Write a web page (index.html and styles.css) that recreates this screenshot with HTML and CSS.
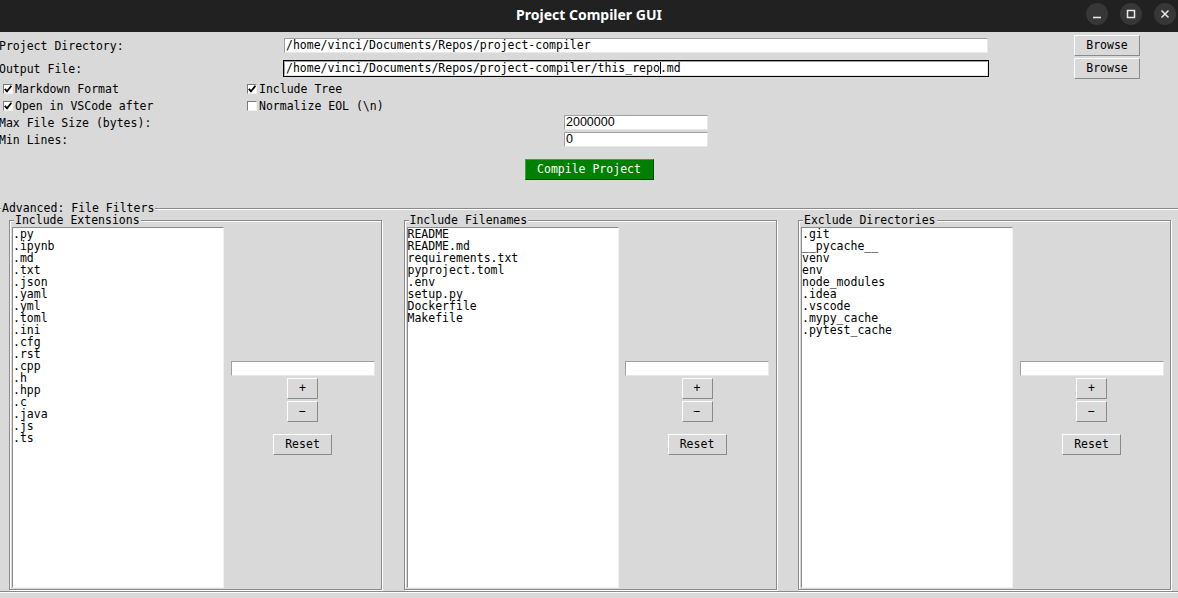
FILE: index.html
```html
<!DOCTYPE html>
<html lang="en">
<head>
<meta charset="utf-8">
<title>Project Compiler GUI</title>
<link rel="stylesheet" href="styles.css">
</head>
<body>
<header class="titlebar">
  <div class="title">Project Compiler GUI</div>
  <div class="wctrls">
    <span class="wbtn"><svg viewBox="0 0 22 22"><line x1="7" y1="14.5" x2="15" y2="14.5" stroke="#e8e8e8" stroke-width="1.6"/></svg></span>
    <span class="wbtn"><svg viewBox="0 0 22 22"><rect x="7.5" y="7.5" width="7" height="7" fill="none" stroke="#e8e8e8" stroke-width="1.5"/></svg></span>
    <span class="wbtn"><svg viewBox="0 0 22 22"><path d="M7.5 7.5 L14.5 14.5 M14.5 7.5 L7.5 14.5" stroke="#e8e8e8" stroke-width="1.5" fill="none"/></svg></span>
  </div>
</header>
<main class="app">
  <div class="row path-row">
    <span class="lbl">Project Directory:</span>
    <div class="entry path">/home/vinci/Documents/Repos/project-compiler</div>
    <button class="btn browse">Browse</button>
  </div>
  <div class="row path-row">
    <span class="lbl">Output File:</span>
    <div class="entry path focus">/home/vinci/Documents/Repos/project-compiler/this_repo<span class="caret"></span>.md</div>
    <button class="btn browse">Browse</button>
  </div>
  <div class="row check-row">
    <span class="check-item first"><span class="cb"><svg viewBox="0 0 8 8"><path d="M0.8 3.8 L3 6.4 L7.4 0.8" fill="none" stroke="#000" stroke-width="1.8"/></svg></span>Markdown Format</span>
    <span class="check-item"><span class="cb"><svg viewBox="0 0 8 8"><path d="M0.8 3.8 L3 6.4 L7.4 0.8" fill="none" stroke="#000" stroke-width="1.8"/></svg></span>Include Tree</span>
  </div>
  <div class="row check-row">
    <span class="check-item first"><span class="cb"><svg viewBox="0 0 8 8"><path d="M0.8 3.8 L3 6.4 L7.4 0.8" fill="none" stroke="#000" stroke-width="1.8"/></svg></span>Open in VSCode after</span>
    <span class="check-item"><span class="cb"></span>Normalize EOL (\n)</span>
  </div>
  <div class="row num-row">
    <span class="lbl">Max File Size (bytes):</span>
    <div class="entry num">2000000</div>
  </div>
  <div class="row num-row">
    <span class="lbl">Min Lines:</span>
    <div class="entry num">0</div>
  </div>
  <div class="compile-row">
    <button class="btn compile">Compile Project</button>
  </div>
  <fieldset class="group outer">
    <legend>Advanced: File Filters</legend>
    <div class="filters">
      <fieldset class="group inner">
        <legend>Include Extensions</legend>
        <div class="pane">
          <ul class="listbox">
            <li>.py</li><li>.ipynb</li><li>.md</li><li>.txt</li><li>.json</li><li>.yaml</li><li>.yml</li><li>.toml</li><li>.ini</li><li>.cfg</li><li>.rst</li><li>.cpp</li><li>.h</li><li>.hpp</li><li>.c</li><li>.java</li><li>.js</li><li>.ts</li>
          </ul>
          <div class="controls">
            <div class="entry small"></div>
            <button class="btn sq">+</button>
            <button class="btn sq minus">−</button>
            <button class="btn reset">Reset</button>
          </div>
        </div>
      </fieldset>
      <fieldset class="group inner">
        <legend>Include Filenames</legend>
        <div class="pane">
          <ul class="listbox">
            <li>README</li><li>README.md</li><li>requirements.txt</li><li>pyproject.toml</li><li>.env</li><li>setup.py</li><li>Dockerfile</li><li>Makefile</li>
          </ul>
          <div class="controls">
            <div class="entry small"></div>
            <button class="btn sq">+</button>
            <button class="btn sq minus">−</button>
            <button class="btn reset">Reset</button>
          </div>
        </div>
      </fieldset>
      <fieldset class="group inner">
        <legend>Exclude Directories</legend>
        <div class="pane">
          <ul class="listbox">
            <li>.git</li><li>__pycache__</li><li>venv</li><li>env</li><li>node_modules</li><li>.idea</li><li>.vscode</li><li>.mypy_cache</li><li>.pytest_cache</li>
          </ul>
          <div class="controls">
            <div class="entry small"></div>
            <button class="btn sq">+</button>
            <button class="btn sq minus">−</button>
            <button class="btn reset">Reset</button>
          </div>
        </div>
      </fieldset>
    </div>
  </fieldset>
</main>
</body>
</html>
```
FILE: styles.css
```css
* { box-sizing: border-box; }
html, body { margin: 0; padding: 0; }
body {
  width: 1178px;
  height: 598px;
  overflow: hidden;
  background: #d9d9d9;
  font-family: "DejaVu Sans Mono", "Liberation Mono", monospace;
  font-size: 11.5px;
  color: #000;
}
.titlebar {
  height: 32px;
  background: #212121;
  display: grid;
  grid-template-columns: 1fr auto 1fr;
  align-items: start;
}
.title {
  grid-column: 2;
  color: #fff;
  font-family: "Noto Sans", "DejaVu Sans", sans-serif;
  font-weight: 700;
  font-size: 14px;
  line-height: 30px;
}
.wctrls {
  grid-column: 3;
  justify-self: end;
  display: flex;
  gap: 12px;
  padding: 3px 2px 0 0;
}
.wbtn {
  width: 22px;
  height: 22px;
  border-radius: 50%;
  background: #373737;
  display: flex;
}
.wbtn svg { width: 22px; height: 22px; }

.app { padding-top: 2px; }
.row { display: flex; align-items: center; }
.path-row { height: 23px; }
.lbl { margin-left: -1px; white-space: nowrap; flex: none; }
.path-row .lbl { width: 285px; }

.entry {
  background: #fff;
  border: 1px solid;
  border-color: #a0a0a0 #e8e8e8 #e8e8e8 #a0a0a0;
  height: 15px;
  line-height: 13px;
  padding: 0 1px;
  white-space: nowrap;
  overflow: hidden;
  flex: none;
}
.entry.path { width: 704px; }
.entry.focus { outline: 1px solid #000; }
.caret {
  display: inline-block;
  width: 1px;
  height: 12px;
  background: #000;
  vertical-align: -2px;
  margin-right: -1px;
}

.btn {
  font: inherit;
  color: #000;
  background: #d9d9d9;
  border: 1px solid;
  border-color: #fdfdfd #8a8a8a #8a8a8a #fdfdfd;
  padding: 0;
  height: 21px;
  line-height: 19px;
  text-align: center;
  flex: none;
}
.browse { width: 66px; margin-left: 86px; }

.check-row { height: 17px; padding-left: 3px; }
.check-item { display: flex; align-items: center; white-space: nowrap; }
.check-item.first { width: 244px; }
.cb {
  width: 10px;
  height: 10px;
  background: #fff;
  border: 1px solid;
  border-color: #7a7a7a #f0f0f0 #f0f0f0 #7a7a7a;
  margin-right: 2px;
  display: flex;
}
.cb svg { width: 8px; height: 8px; }

.num-row { height: 17px; }
.num-row .lbl { width: 565px; }
.entry.num {
  width: 144px;
  font-family: "Liberation Sans", Arial, sans-serif;
  font-size: 12.5px;
  line-height: 13px;
}

.compile-row { display: flex; justify-content: center; margin-top: 11px; }
.compile {
  width: 129px;
  background: #008000;
  color: #fff;
  border-color: #33a833 #004a00 #004a00 #33a833;
}

.group {
  border: 1px solid #8a8a8a;
  box-shadow: inset 1px 1px 0 #fff, 1px 1px 0 #fff;
  margin: 0;
  min-width: 0;
}
.group > legend {
  padding: 0 1px;
  line-height: 12px;
  background: #d9d9d9;
}
.outer { margin: 22px -8px 0 -4px; padding: 0 0 1px 12px; }
.outer > legend { margin-left: -8px; }
.filters { display: flex; gap: 21.5px; }
.inner { width: 373px; flex: none; padding: 1px 0 1px 2px; }
.inner > legend { margin-left: 2px; }
.pane { display: flex; }
.listbox {
  list-style: none;
  margin: 0;
  padding: 0;
  width: 212px;
  height: 361px;
  background: #fff;
  border: 1px solid;
  border-color: #8a8a8a #f2f2f2 #f2f2f2 #8a8a8a;
  line-height: 12px;
  flex: none;
}
.controls {
  flex: 1;
  display: flex;
  flex-direction: column;
  align-items: center;
  justify-content: center;
}
.entry.small { width: 144px; margin-bottom: 2px; }
.sq { width: 31px; margin-bottom: 2px; }
.sq.minus { margin-bottom: 12px; }
.reset { width: 59px; }
```
